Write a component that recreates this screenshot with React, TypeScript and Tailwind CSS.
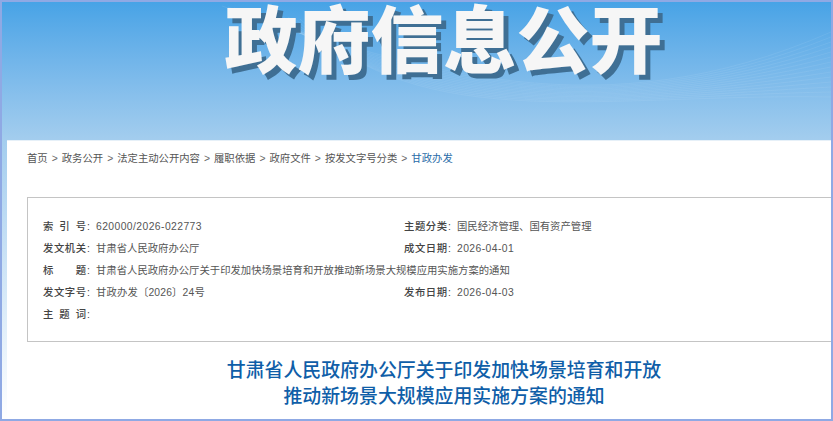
const crumbs = ["首页", "政务公开", "法定主动公开内容", "履职依据", "政府文件", "按发文字号分类"];

const leftRows = [
  { label: ["索", "引", "号"], value: "620000/2026-022773", track: "tracking-[0.42px]" },
  { label: ["发", "文", "机", "关"], value: "甘肃省人民政府办公厅", track: "" },
  { label: ["标", "题"], value: "甘肃省人民政府办公厅关于印发加快场景培育和开放推动新场景大规模应用实施方案的通知", track: "" },
  { label: ["发", "文", "字", "号"], value: "甘政办发〔2026〕24号", track: "tracking-[0.15px]" },
  { label: ["主", "题", "词"], value: "", track: "" },
];

const rightRows = [
  { label: ["主", "题", "分", "类"], value: "国民经济管理、国有资产管理", track: "" },
  { label: ["成", "文", "日", "期"], value: "2026-04-01", track: "tracking-[0.42px]" },
  { label: [], value: "", track: "" },
  { label: ["发", "布", "日", "期"], value: "2026-04-03", track: "tracking-[0.42px]" },
];

const waves = [0, 1, 2, 3, 4, 5, 6, 7, 8, 9, 10, 11, 12, 13];

function MetaRow({ label, value, track }: { label: string[]; value: string; track: string }) {
  if (label.length === 0) return <div className="h-[22px]" />;
  return (
    <div className="h-[22px] flex items-center whitespace-nowrap">
      <span className="w-[53px] shrink-0 flex font-medium text-[#444]">
        <span className="w-[43px] flex justify-between">
          {label.map((ch) => (
            <span key={ch}>{ch}</span>
          ))}
        </span>
        <span className="ml-[1px]">:</span>
      </span>
      <span className={`text-[#555] ${track}`}>{value}</span>
    </div>
  );
}

export default function App() {
  return (
    <div
      className="w-[833px] h-[421px] overflow-hidden border-2 border-[#8fa9e4] bg-gradient-to-b from-[#47a3e6] via-[#a3cdee] via-[33%] to-[#ffffff] flex flex-col text-[10.35px]"
      style={{ fontFamily: '"Liberation Sans", "Noto Sans CJK SC", sans-serif' }}
    >
      <header className="relative h-[138px] shrink-0 flex justify-center">
        <svg className="absolute inset-0 w-full h-full" viewBox="0 0 829 138" fill="none">
          {waves.map((i) => (
            <path
              key={i}
              d={`M${220 + i * 6} ${4 + i} C 420 ${70 + i * 5}, 600 ${130 - i * 3}, 829 ${30 + i * 5}`}
              stroke="#ffffff"
              strokeOpacity="0.07"
            />
          ))}
        </svg>
        <h1 className="relative h-[78px] flex items-center ml-[54px] text-[73px] leading-none font-black text-[#f6f6f6] [text-shadow:5px_5px_0_#3f6f94] whitespace-nowrap">
          政府信息公开
        </h1>
      </header>

      <main className="flex-1 ml-[5px] bg-white border-t border-[#e6f0f8] pl-[20px]">
        <nav className="h-[35px] flex items-center gap-[4px] text-[#555]">
          {crumbs.map((c) => (
            <span key={c} className="flex items-center gap-[4px]">
              {c}
              <span className="text-[#666]">&gt;</span>
            </span>
          ))}
          <span className="text-[#2a6ca8]">甘政办发</span>
        </nav>

        <section className="mt-[21px] h-[145px] border border-r-0 border-[#c4c4c4] pl-[15px] pt-[18px] flex">
          <div className="w-[361px]">
            {leftRows.map((r) => (
              <MetaRow key={r.label.join("")} label={r.label} value={r.value} track={r.track} />
            ))}
          </div>
          <div>
            {rightRows.map((r, i) => (
              <MetaRow key={i} label={r.label} value={r.value} track={r.track} />
            ))}
          </div>
        </section>

        <h2 className="mt-[16px] ml-[30px] text-center text-[18.9px] leading-[26px] font-medium text-[#0f5ea8]">
          甘肃省人民政府办公厅关于印发加快场景培育和开放
          <br />
          推动新场景大规模应用实施方案的通知
        </h2>
      </main>
    </div>
  );
}
